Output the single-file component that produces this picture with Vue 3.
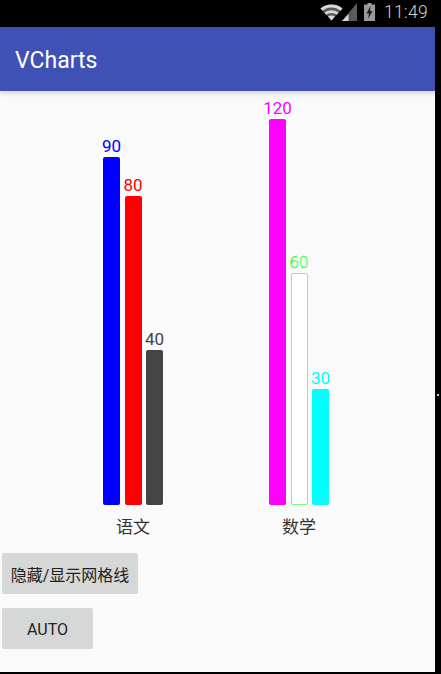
<script setup>
const scale = 3.867;
const maxHeight = 386;

const groups = [
  {
    name: '语文',
    bars: [
      { value: 90, color: '#0000ff' },
      { value: 80, color: '#ff0000' },
      { value: 40, color: '#444444' },
    ],
  },
  {
    name: '数学',
    bars: [
      { value: 120, color: '#ff00ff' },
      { value: 60, color: '#00ff00', outline: true },
      { value: 30, color: '#00ffff' },
    ],
  },
];

const barHeight = (value) => Math.min(value * scale, maxHeight) + 'px';
</script>

<template>
  <div class="screen">
    <div class="device">
      <div class="status-bar">
        <svg class="wifi" width="23" height="17" viewBox="0 0 23 17">
          <path d="M11.5 16.5 0.5 4.5C3.5 1.8 7.2 0.5 11.5 0.5S19.5 1.8 22.5 4.5Z" fill="#5a5a5a" />
          <path d="M11.5 16.5 0.5 4.5C3.5 1.8 7.2 0.5 11.5 0.5S19.5 1.8 22.5 4.5L20.4 6.8C18 4.6 15 3.4 11.5 3.4S5 4.6 2.6 6.8Z" fill="#d8d8d8" />
          <path d="M11.5 16.5 4.4 8.8C6.3 7.2 8.7 6.3 11.5 6.3S16.7 7.2 18.6 8.8L16.8 10.8C15.4 9.6 13.6 8.9 11.5 8.9S7.6 9.6 6.2 10.8Z" fill="#d8d8d8" />
          <path d="M11.5 16.5 8 12.6C9 11.9 10.2 11.5 11.5 11.5S14 11.9 15 12.6Z" fill="#d8d8d8" />
        </svg>
        <svg class="signal" width="15" height="18" viewBox="0 0 15 18">
          <path d="M15 0V18H0Z" fill="#5a5a5a" />
          <path d="M6.5 11V18H0Z" fill="#d8d8d8" />
        </svg>
        <svg class="battery" width="11" height="18" viewBox="0 0 11 18">
          <path d="M3.5 0H7.5V1.5H11V18H0V1.5H3.5Z" fill="#9a9a9a" />
          <path d="M6.5 3 2.5 10.5H5L4 16 8.5 8H6Z" fill="#1a1a1a" />
        </svg>
        <span class="time">11:49</span>
      </div>
      <header class="app-bar">VCharts</header>
      <main class="content">
        <div class="chart">
          <div v-for="group in groups" :key="group.name" class="group">
            <div class="bars">
              <div v-for="bar in group.bars" :key="bar.value" class="bar-col">
                <span
                  class="bar-value"
                  :class="{ outlined: bar.outline }"
                  :style="{ color: bar.outline ? '#ffffff' : bar.color, WebkitTextStrokeColor: bar.outline ? bar.color : 'transparent' }"
                >{{ bar.value }}</span>
                <div
                  class="bar"
                  :class="{ outlined: bar.outline }"
                  :style="{ height: barHeight(bar.value), background: bar.outline ? '#ffffff' : bar.color }"
                ></div>
              </div>
            </div>
            <div class="group-name">{{ group.name }}</div>
          </div>
        </div>
        <button class="btn btn-grid">隐藏/显示网格线</button>
        <button class="btn btn-auto">AUTO</button>
      </main>
    </div>
    <i class="edge-dot"></i>
  </div>
</template>

<style>
html,
body {
  margin: 0;
  background: #000;
}
</style>

<style scoped>
.screen {
  position: relative;
  width: 441px;
  height: 674px;
  background: #000;
  overflow: hidden;
  font-family: Roboto, "Noto Sans CJK SC", sans-serif;
}

.device {
  width: 435px;
  height: 672px;
  background: #fafafa;
  display: flex;
  flex-direction: column;
}

.status-bar {
  height: 27px;
  flex: none;
  width: 441px;
  background: #000;
  display: flex;
  align-items: center;
  justify-content: flex-end;
  padding: 0 13px 3px 0;
  box-sizing: border-box;
}

.wifi {
  margin-right: -1px;
}

.signal {
  margin-right: 7px;
}

.battery {
  margin-right: 9px;
}

.time {
  color: #d0d0d0;
  font-size: 17.5px;
  font-weight: 300;
  letter-spacing: 0.3px;
}

.app-bar {
  height: 64px;
  flex: none;
  box-sizing: border-box;
  padding: 2px 0 0 15px;
  display: flex;
  align-items: center;
  background: #3f51b5;
  color: #fff;
  font-size: 23px;
  box-shadow: 0 2px 5px rgba(0, 0, 0, 0.18);
  position: relative;
}

.content {
  flex: 1;
  display: flex;
  flex-direction: column;
  align-items: flex-start;
  padding-left: 2px;
}

.chart {
  display: flex;
  padding-left: 48px;
  height: 446px;
  align-items: flex-end;
}

.group {
  width: 166px;
  display: flex;
  flex-direction: column;
  align-items: center;
}

.bars {
  display: flex;
  align-items: flex-end;
  gap: 4.5px;
}

.bar-col {
  width: 17px;
  display: flex;
  flex-direction: column;
  align-items: center;
}

.bar-value {
  font-size: 17px;
  line-height: 20px;
  margin-bottom: 1px;
  white-space: nowrap;
}

.bar-value.outlined {
  font-weight: 300;
  -webkit-text-stroke-width: 0.45px;
}

.bar {
  width: 17px;
  border-radius: 2px;
  box-sizing: border-box;
}

.bar.outlined {
  border: 1px solid #7dfa7d;
}

.group-name {
  margin-top: 12px;
  height: 20px;
  line-height: 20px;
  font-size: 17px;
  color: #333;
}

.btn {
  border: 0;
  background: #d6d7d7;
  border-radius: 2px;
  color: #222;
  font-family: Roboto, "Noto Sans CJK SC", sans-serif;
  font-size: 16px;
  height: 41px;
  padding: 0;
}

.btn-grid {
  width: 136px;
  margin-top: 16px;
}

.btn-auto {
  width: 91px;
  margin-top: 14px;
  padding-top: 1px;
}

.edge-dot {
  position: absolute;
  left: 437px;
  top: 394px;
  width: 2px;
  height: 2px;
  background: #ccc;
}
</style>
